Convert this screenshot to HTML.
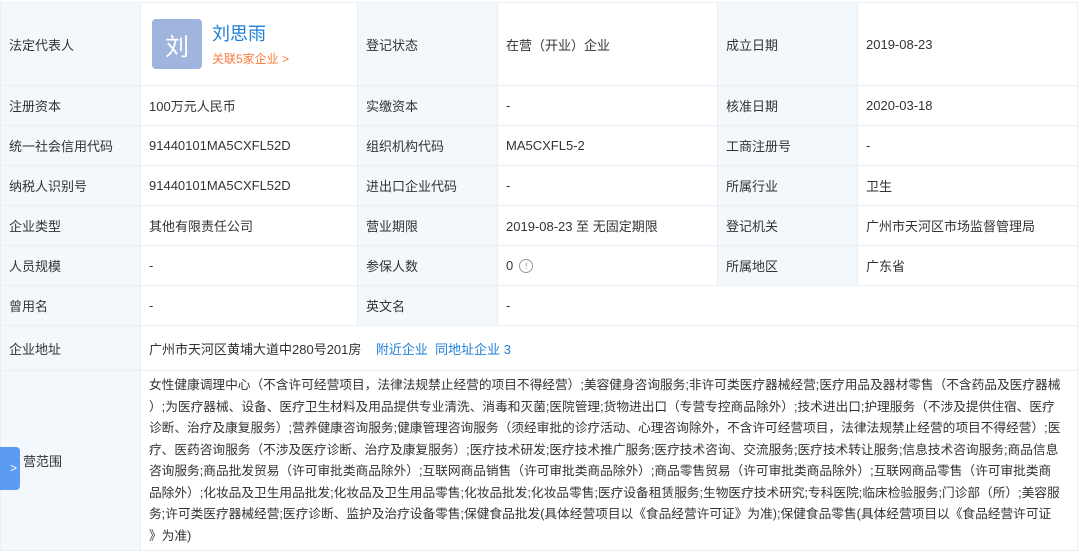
<!DOCTYPE html>
<html><head><meta charset="utf-8"><style>
*{margin:0;padding:0;box-sizing:border-box}
body{width:1080px;height:550px;background:#fff;font-family:"Liberation Sans","Noto Sans CJK SC",sans-serif;font-size:13px;color:#333;overflow:hidden;position:relative}
table{border-collapse:collapse;position:absolute;left:0;top:2px;width:1077px;table-layout:fixed}
td{border:1px solid #e8eff6;padding:0 8px;vertical-align:middle;white-space:nowrap}
td.l{background:#f3f8fd;color:#333}
a{color:#1e7fd8;text-decoration:none}
.sc div{white-space:nowrap;line-height:21.5px;font-size:12.7px}
</style></head><body>
<table>
<colgroup><col style="width:140px"><col style="width:217px"><col style="width:140px"><col style="width:220px"><col style="width:140px"><col style="width:220px"></colgroup>
<tr style="height:83px"><td class="l">法定代表人</td><td>
<div style="display:flex;align-items:center"><div style="width:50px;height:50px;background:#a0b5dd;border-radius:4px;color:#fff;font-size:24px;display:flex;align-items:center;justify-content:center;margin-left:3px">刘</div>
<div style="margin-left:10px"><div style="color:#1e7fd8;font-size:18px;line-height:24px">刘思雨</div><div style="color:#f97b3d;font-size:12px;margin-top:4px">关联5家企业 &gt;</div></div></div></td>
<td class="l">登记状态</td><td>在营（开业）企业</td><td class="l">成立日期</td><td>2019-08-23</td></tr>
<tr style="height:40px"><td class="l">注册资本</td><td>100万元人民币</td><td class="l">实缴资本</td><td>-</td><td class="l">核准日期</td><td>2020-03-18</td></tr>
<tr style="height:40px"><td class="l">统一社会信用代码</td><td>91440101MA5CXFL52D</td><td class="l">组织机构代码</td><td>MA5CXFL5-2</td><td class="l">工商注册号</td><td>-</td></tr>
<tr style="height:40px"><td class="l">纳税人识别号</td><td>91440101MA5CXFL52D</td><td class="l">进出口企业代码</td><td>-</td><td class="l">所属行业</td><td>卫生</td></tr>
<tr style="height:40px"><td class="l">企业类型</td><td>其他有限责任公司</td><td class="l">营业期限</td><td>2019-08-23 至 无固定期限</td><td class="l">登记机关</td><td>广州市天河区市场监督管理局</td></tr>
<tr style="height:40px"><td class="l">人员规模</td><td>-</td><td class="l">参保人数</td><td><span style="display:inline-flex;align-items:center">0<span style="display:inline-block;width:14px;height:14px;border:1px solid #999;border-radius:50%;font-size:9px;line-height:12px;text-align:center;color:#999;margin-left:6px">!</span></span></td><td class="l">所属地区</td><td>广东省</td></tr>
<tr style="height:40px"><td class="l">曾用名</td><td>-</td><td class="l">英文名</td><td colspan="3">-</td></tr>
<tr style="height:45px"><td class="l">企业地址</td><td colspan="5">广州市天河区黄埔大道中280号201房 &nbsp;&nbsp;&nbsp;<a>附近企业</a>&nbsp;&nbsp;<a>同地址企业 3</a></td></tr>
<tr style="height:180px"><td class="l" style="padding-left:22px">营范围</td><td colspan="5" class="sc" style="vertical-align:top;padding-top:4px">
<div>女性健康调理中心（不含许可经营项目，法律法规禁止经营的项目不得经营）;美容健身咨询服务;非许可类医疗器械经营;医疗用品及器材零售（不含药品及医疗器械</div>
<div>）;为医疗器械、设备、医疗卫生材料及用品提供专业清洗、消毒和灭菌;医院管理;货物进出口（专营专控商品除外）;技术进出口;护理服务（不涉及提供住宿、医疗</div>
<div>诊断、治疗及康复服务）;营养健康咨询服务;健康管理咨询服务（须经审批的诊疗活动、心理咨询除外，不含许可经营项目，法律法规禁止经营的项目不得经营）;医</div>
<div>疗、医药咨询服务（不涉及医疗诊断、治疗及康复服务）;医疗技术研发;医疗技术推广服务;医疗技术咨询、交流服务;医疗技术转让服务;信息技术咨询服务;商品信息</div>
<div>咨询服务;商品批发贸易（许可审批类商品除外）;互联网商品销售（许可审批类商品除外）;商品零售贸易（许可审批类商品除外）;互联网商品零售（许可审批类商</div>
<div>品除外）;化妆品及卫生用品批发;化妆品及卫生用品零售;化妆品批发;化妆品零售;医疗设备租赁服务;生物医疗技术研究;专科医院;临床检验服务;门诊部（所）;美容服</div>
<div>务;许可类医疗器械经营;医疗诊断、监护及治疗设备零售;保健食品批发(具体经营项目以《食品经营许可证》为准);保健食品零售(具体经营项目以《食品经营许可证</div>
<div>》为准)</div></td></tr>
</table>
<div style="position:absolute;left:0;top:447px;width:20px;height:43px;background:#5b9bf0;border-radius:0 4px 4px 0;color:#fff;font-size:12px;line-height:43px;text-align:right;padding-right:3px">&gt;</div>
</body></html>
